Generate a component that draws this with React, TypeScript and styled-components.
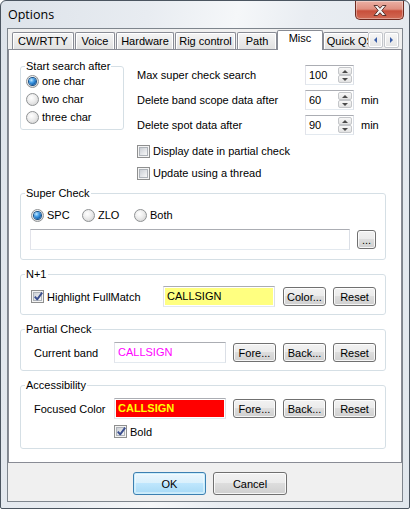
import React from 'react';
import styled, { createGlobalStyle, css } from 'styled-components';

const GlobalStyle = createGlobalStyle`
  * { box-sizing: border-box; }
  html, body { margin: 0; padding: 0; background: #ffffff; }
  body {
    font-family: "Liberation Sans", Arial, sans-serif;
    font-size: 11px;
    color: #000;
  }
`;

const Window = styled.div`
  width: 410px;
  height: 509px;
  display: flex;
  flex-direction: column;
  border: 1px solid #4b5560;
  border-radius: 6px 6px 2px 2px;
  background: linear-gradient(100deg, #dde3ea 0%, #e8ecf1 30%, #f5f7f9 48%, #e9edf2 62%, #e1e7ed 100%);
  overflow: hidden;
`;

const TitleBar = styled.div`
  height: 27px;
  flex-shrink: 0;
  display: flex;
  align-items: flex-start;
  justify-content: space-between;
  padding-left: 7px;
`;

const Title = styled.div`
  font-family: "Open Sans", "Noto Sans", sans-serif;
  font-size: 12.5px;
  line-height: 28px;
  color: #000;
`;

const CloseButton = styled.div`
  width: 49px;
  height: 19px;
  margin-right: 5px;
  border: 1px solid #6e2b21;
  border-top: none;
  border-radius: 0 0 5px 5px;
  background: linear-gradient(#eab0a4 0%, #df8f80 45%, #c84f3b 55%, #d26b56 100%);
  box-shadow: inset 0 0 0 1px rgba(255, 255, 255, 0.35);
  display: flex;
  align-items: center;
  justify-content: center;
`;

const Client = styled.div`
  flex: 1;
  margin: 0 6px 6px 6px;
  border: 1px solid #7e858d;
  background: #f0f0f0;
  display: flex;
  flex-direction: column;
`;

const TabStrip = styled.div`
  height: 21px;
  flex-shrink: 0;
  display: flex;
  padding: 0 3px 0 4px;
  position: relative;
  z-index: 1;
`;

const TabsViewport = styled.div`
  flex: 1;
  display: flex;
  align-items: flex-start;
  gap: 1px;
  overflow: hidden;
  height: 21px;
`;

const Tab = styled.div<{ $w: number; $active?: boolean }>`
  flex-shrink: 0;
  width: ${p => p.$w}px;
  height: 17px;
  margin-top: 3px;
  border: 1px solid #898c95;
  border-bottom: none;
  border-radius: 2px 2px 0 0;
  background: linear-gradient(#f5f5f5, #e1e1e1);
  box-shadow: inset 1px 1px 0 #fff, inset -1px 0 0 #fff;
  text-align: center;
  line-height: 16px;
  white-space: nowrap;
  ${p =>
    p.$active &&
    css`
      height: 20px;
      margin-top: 1px;
      margin-left: -1px;
      margin-right: -1px;
      background: #ffffff;
      box-shadow: none;
      line-height: 14px;
    `}
`;

const ScrollArrows = styled.div`
  display: flex;
  gap: 1px;
  margin-top: 3px;
`;

const ArrowButton = styled.div`
  width: 15px;
  height: 16px;
  border: 1px solid #c3c6cb;
  border-radius: 2px;
  background: linear-gradient(#f7f7f7, #e4e4e4);
  box-shadow: inset 0 0 0 1px #fff;
  display: flex;
  align-items: center;
  justify-content: center;
`;

const Tri = styled.span<{ $dir: 'left' | 'right' | 'up' | 'down'; $color?: string }>`
  width: 0;
  height: 0;
  ${p => {
    const c = p.$color ?? '#3a5ea8';
    switch (p.$dir) {
      case 'left':
        return css`border-top: 3px solid transparent; border-bottom: 3px solid transparent; border-right: 3px solid ${c};`;
      case 'right':
        return css`border-top: 3px solid transparent; border-bottom: 3px solid transparent; border-left: 3px solid ${c};`;
      case 'up':
        return css`border-left: 3px solid transparent; border-right: 3px solid transparent; border-bottom: 3px solid ${c};`;
      default:
        return css`border-left: 3px solid transparent; border-right: 3px solid transparent; border-top: 3px solid ${c};`;
    }
  }}
`;

const Page = styled.div`
  flex: 1;
  margin-top: -1px;
  background: #ffffff;
  border: 1px solid #898c95;
  padding: 10px 15px 0 11px;
  display: flex;
  flex-direction: column;
`;

const TopSection = styled.div`
  display: flex;
  align-items: flex-start;
  gap: 13px;
`;

const Group = styled.fieldset<{ $pl: number; $pr: number; $pt: number; $pb: number; $w?: number; $mt?: number }>`
  margin: ${p => p.$mt ?? 0}px 0 0 0;
  min-width: 0;
  ${p => (p.$w ? css`width: ${p.$w}px; flex-shrink: 0;` : '')}
  border: 1px solid #d5dfe5;
  border-radius: 3px;
  padding: ${p => `${p.$pt}px ${p.$pr}px ${p.$pb}px ${p.$pl}px`};
`;

const Legend = styled.legend<{ $ml: number }>`
  padding: 0 1px;
  margin-left: ${p => p.$ml}px;
  line-height: 12px;
  font-size: 11px;
`;

const RadioRow = styled.label<{ $w?: number; $h?: number }>`
  display: flex;
  align-items: center;
  gap: 3px;
  height: ${p => p.$h ?? 18}px;
  ${p => (p.$w ? css`width: ${p.$w}px; flex-shrink: 0;` : '')}
  white-space: nowrap;
`;

const Radio = styled.span<{ $on?: boolean }>`
  width: 13px;
  height: 13px;
  flex-shrink: 0;
  border-radius: 50%;
  border: 1px solid #8f9294;
  background: radial-gradient(circle at 40% 35%, #ffffff 0%, #ececec 45%, #cbcbcb 100%);
  display: flex;
  align-items: center;
  justify-content: center;
  &::after {
    content: '';
    display: ${p => (p.$on ? 'block' : 'none')};
    width: 7px;
    height: 7px;
    border-radius: 50%;
    background: radial-gradient(circle at 35% 30%, #c4e8ff 0%, #4aa3ea 35%, #1565b3 70%, #0b3f7d 100%);
    box-shadow: 0 0 0 1px #154f86;
  }
`;

const RightCol = styled.div`
  margin-top: 5px;
  display: flex;
  flex-direction: column;
`;

const SpinGrid = styled.div`
  display: grid;
  grid-template-columns: 168px 49px auto;
  grid-auto-rows: 20px;
  row-gap: 5px;
  align-items: center;
  white-space: nowrap;
`;

const Unit = styled.span`
  margin-left: 7px;
`;

const SpinEdit = styled.div`
  height: 20px;
  border: 1px solid #e3e9ef;
  border-top-color: #abadb3;
  border-left-color: #e2e3ea;
  border-right-color: #dbdfe6;
  background: #fff;
  padding: 1px;
  display: flex;
`;

const SpinValue = styled.span`
  flex: 1;
  padding-left: 2px;
  line-height: 16px;
`;

const SpinButtons = styled.div`
  width: 14px;
  display: flex;
  flex-direction: column;
`;

const SpinHalf = styled.div`
  height: 8px;
  border: 1px solid #c4c6c9;
  border-radius: 2px;
  background: linear-gradient(#f8f8f8, #e2e2e2);
  display: flex;
  align-items: center;
  justify-content: center;
`;

const CheckList = styled.div`
  margin-top: 5px;
  display: flex;
  flex-direction: column;
`;

const CheckRow = styled.label<{ $h?: number; $ml?: number; $w?: number }>`
  display: flex;
  align-items: center;
  gap: 3px;
  height: ${p => p.$h ?? 22}px;
  margin-left: ${p => p.$ml ?? 0}px;
  ${p => (p.$w ? css`width: ${p.$w}px; flex-shrink: 0;` : '')}
  white-space: nowrap;
`;

const CheckBox = styled.span`
  position: relative;
  width: 13px;
  height: 13px;
  flex-shrink: 0;
  border: 1px solid #8e8f8f;
  background: #f4f4f4;
  padding: 1px;
  display: flex;
`;

const CheckInner = styled.span`
  flex: 1;
  border: 1px solid #aeb3b9;
  background: linear-gradient(135deg, #cbcfd5 0%, #e3e5e8 55%, #f7f7f7 100%);
`;

const CheckMark = styled.svg`
  position: absolute;
  left: 0;
  top: -1px;
`;

const Row = styled.div<{ $mt?: number; $gap?: number }>`
  display: flex;
  align-items: center;
  height: 21px;
  gap: ${p => p.$gap ?? 7}px;
  margin-top: ${p => p.$mt ?? 0}px;
`;

const RadioLine = styled.div`
  display: flex;
  margin-left: 1px;
`;

const Edit = styled.div<{ $w?: number }>`
  ${p => (p.$w ? css`width: ${p.$w}px; flex-shrink: 0;` : css`flex: 1;`)}
  height: 21px;
  border: 1px solid #e3e9ef;
  border-top-color: #abadb3;
  border-left-color: #e2e3ea;
  border-right-color: #dbdfe6;
  background: #fff;
  padding: 1px;
  display: flex;
`;

const EditFill = styled.div<{ $bg?: string; $fg?: string; $bold?: boolean }>`
  flex: 1;
  background: ${p => p.$bg ?? '#fff'};
  color: ${p => p.$fg ?? '#000'};
  font-weight: ${p => (p.$bold ? 700 : 400)};
  padding-left: 2px;
  line-height: 17px;
  white-space: nowrap;
`;

const Button = styled.button<{ $w: number; $h?: number; $primary?: boolean }>`
  width: ${p => p.$w}px;
  height: ${p => p.$h ?? 19}px;
  flex-shrink: 0;
  padding: 0;
  font-family: "Liberation Sans", Arial, sans-serif;
  font-size: 11px;
  color: #000;
  border: 1px solid #707070;
  border-radius: 3px;
  background: linear-gradient(#f2f2f2 0%, #ebebeb 49%, #dddddd 50%, #cfcfcf 100%);
  box-shadow: inset 0 0 0 1px rgba(255, 255, 255, 0.8);
  ${p =>
    p.$primary &&
    css`
      border-color: #3c7fb1;
      background: linear-gradient(#eaf6fd 0%, #d9f0fc 49%, #bee6fd 50%, #a7d9f5 100%);
      box-shadow: inset 0 0 0 1px #cbeefc, inset 0 0 0 2px rgba(255, 255, 255, 0.4);
    `}
`;

const FieldLabel = styled.span<{ $w: number }>`
  width: ${p => p.$w}px;
  flex-shrink: 0;
  padding-left: 4px;
  white-space: nowrap;
`;

const BottomBar = styled.div`
  height: 38px;
  flex-shrink: 0;
  display: flex;
  align-items: flex-start;
  gap: 7px;
  padding: 9px 0 0 125px;
`;

const Check: React.FC<{ checked?: boolean }> = ({ checked }) => (
  <CheckBox>
    <CheckInner />
    {checked && (
      <CheckMark width="13" height="13" viewBox="0 0 13 13">
        <path d="M2.8 6.6 L5.2 9.4 L10.2 2.6" fill="none" stroke="#3b4f8f" strokeWidth="1.9" strokeLinejoin="round" />
      </CheckMark>
    )}
  </CheckBox>
);

const GroupBox: React.FC<{
  title: string;
  pl: number;
  pr: number;
  pt: number;
  pb: number;
  w?: number;
  mt?: number;
  children: React.ReactNode;
}> = ({ title, pl, pr, pt, pb, w, mt, children }) => (
  <Group $pl={pl} $pr={pr} $pt={pt} $pb={pb} $w={w} $mt={mt}>
    <Legend $ml={4 - pl}>{title}</Legend>
    {children}
  </Group>
);

const tabs = [
  { label: 'CW/RTTY', w: 62 },
  { label: 'Voice', w: 40 },
  { label: 'Hardware', w: 58 },
  { label: 'Rig control', w: 61 },
  { label: 'Path', w: 40 },
  { label: 'Misc', w: 46, active: true },
  { label: 'Quick QSY', w: 62 },
];

const spins = [
  { label: 'Max super check search', value: '100', unit: '' },
  { label: 'Delete band scope data after', value: '60', unit: 'min' },
  { label: 'Delete spot data after', value: '90', unit: 'min' },
];

export default function App() {
  return (
    <>
      <GlobalStyle />
      <Window>
        <TitleBar>
          <Title>Options</Title>
          <CloseButton>
            <svg width="14" height="11" viewBox="0 0 14 11">
              <polygon
                points="1,0.5 4.5,0.5 7,3.3 9.5,0.5 13,0.5 8.8,5.5 13,10.5 9.5,10.5 7,7.7 4.5,10.5 1,10.5 5.2,5.5"
                fill="#f4f4f4"
                stroke="#4a2621"
                strokeWidth="0.9"
                strokeLinejoin="round"
              />
            </svg>
          </CloseButton>
        </TitleBar>
        <Client>
          <TabStrip>
            <TabsViewport>
              {tabs.map(t => (
                <Tab key={t.label} $w={t.w} $active={t.active}>
                  {t.label}
                </Tab>
              ))}
            </TabsViewport>
            <ScrollArrows>
              <ArrowButton>
                <Tri $dir="left" />
              </ArrowButton>
              <ArrowButton>
                <Tri $dir="right" />
              </ArrowButton>
            </ScrollArrows>
          </TabStrip>
          <Page>
            <TopSection>
              <GroupBox title="Start search after" w={104} pl={5} pr={4} pt={0} pb={3}>
                <RadioRow>
                  <Radio $on />
                  one char
                </RadioRow>
                <RadioRow>
                  <Radio />
                  two char
                </RadioRow>
                <RadioRow>
                  <Radio />
                  three char
                </RadioRow>
              </GroupBox>
              <RightCol>
                <SpinGrid>
                  {spins.map(s => (
                    <React.Fragment key={s.label}>
                      <span>{s.label}</span>
                      <SpinEdit>
                        <SpinValue>{s.value}</SpinValue>
                        <SpinButtons>
                          <SpinHalf>
                            <Tri $dir="up" $color="#4a4a4a" />
                          </SpinHalf>
                          <SpinHalf>
                            <Tri $dir="down" $color="#4a4a4a" />
                          </SpinHalf>
                        </SpinButtons>
                      </SpinEdit>
                      <Unit>{s.unit}</Unit>
                    </React.Fragment>
                  ))}
                </SpinGrid>
                <CheckList>
                  <CheckRow>
                    <Check />
                    Display date in partial check
                  </CheckRow>
                  <CheckRow>
                    <Check />
                    Update using a thread
                  </CheckRow>
                </CheckList>
              </RightCol>
            </TopSection>

            <GroupBox title="Super Check" mt={3} pl={9} pr={9} pt={7} pb={9}>
              <RadioLine>
                <RadioRow $w={51}>
                  <Radio $on />
                  SPC
                </RadioRow>
                <RadioRow $w={52}>
                  <Radio />
                  ZLO
                </RadioRow>
                <RadioRow>
                  <Radio />
                  Both
                </RadioRow>
              </RadioLine>
              <Row $mt={5}>
                <Edit>
                  <EditFill />
                </Edit>
                <Button $w={19}>...</Button>
              </Row>
            </GroupBox>

            <GroupBox title="N+1" mt={8} pl={9} pr={9} pt={6} pb={7}>
              <Row $gap={0}>
                <CheckRow $h={21} $ml={1} $w={132}>
                  <Check checked />
                  Highlight FullMatch
                </CheckRow>
                <Edit $w={112}>
                  <EditFill $bg="#ffff80">CALLSIGN</EditFill>
                </Edit>
                <Button $w={43} style={{ marginLeft: 8 }}>Color...</Button>
                <Button $w={43} style={{ marginLeft: 7 }}>Reset</Button>
              </Row>
            </GroupBox>

            <GroupBox title="Partial Check" mt={8} pl={9} pr={9} pt={7} pb={7}>
              <Row $gap={0}>
                <FieldLabel $w={84}>Current band</FieldLabel>
                <Edit $w={112}>
                  <EditFill $fg="#ff00ff">CALLSIGN</EditFill>
                </Edit>
                <Button $w={43} style={{ marginLeft: 7 }}>Fore...</Button>
                <Button $w={43} style={{ marginLeft: 7 }}>Back...</Button>
                <Button $w={43} style={{ marginLeft: 7 }}>Reset</Button>
              </Row>
            </GroupBox>

            <GroupBox title="Accessibility" mt={8} pl={9} pr={9} pt={7} pb={8}>
              <Row $gap={0}>
                <FieldLabel $w={84}>Focused Color</FieldLabel>
                <Edit $w={112}>
                  <EditFill $bg="#ff0000" $fg="#ffff00" $bold>
                    CALLSIGN
                  </EditFill>
                </Edit>
                <Button $w={43} style={{ marginLeft: 7 }}>Fore...</Button>
                <Button $w={43} style={{ marginLeft: 7 }}>Back...</Button>
                <Button $w={43} style={{ marginLeft: 7 }}>Reset</Button>
              </Row>
              <CheckRow $h={17} $ml={84} style={{ marginTop: 4 }}>
                <Check checked />
                Bold
              </CheckRow>
            </GroupBox>
          </Page>
          <BottomBar>
            <Button $w={73} $h={23} $primary>
              OK
            </Button>
            <Button $w={74} $h={23}>
              Cancel
            </Button>
          </BottomBar>
        </Client>
      </Window>
    </>
  );
}
